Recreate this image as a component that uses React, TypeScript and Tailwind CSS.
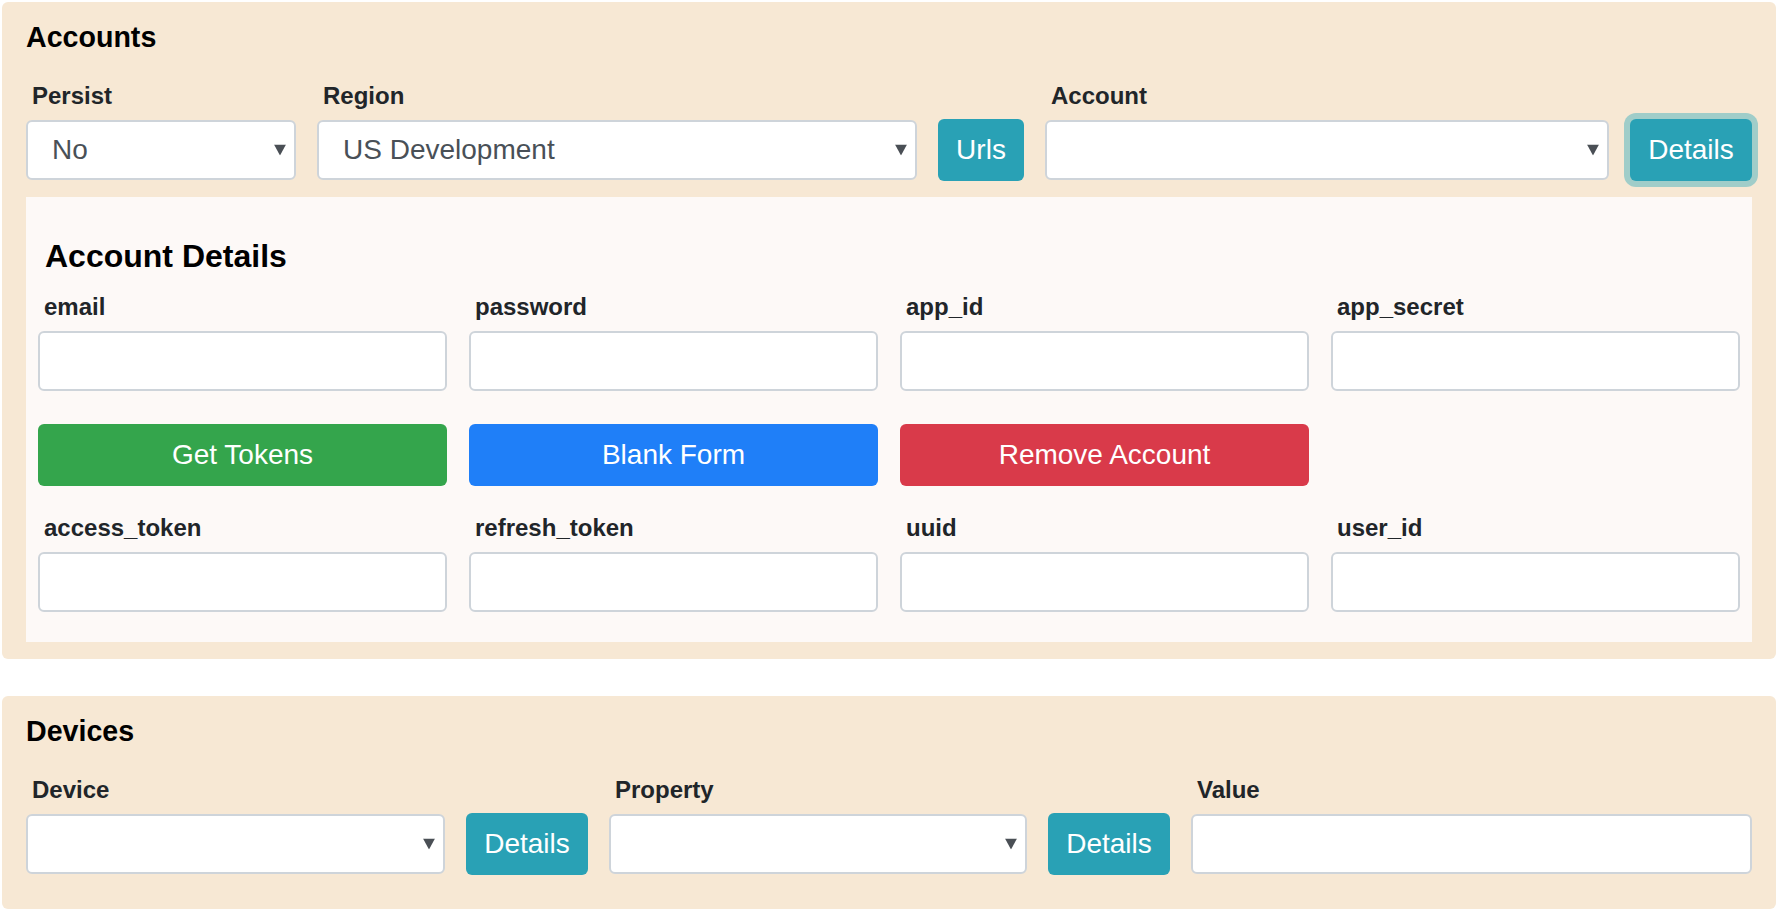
import { ReactNode } from 'react';

const Arrow = () => (
  <svg
    className="pointer-events-none absolute right-[10px] top-1/2 -translate-y-1/2"
    width="12"
    height="11"
    viewBox="0 0 12 11"
  >
    <polygon points="0,0 12,0 6,11" fill="#4a4f55" />
  </svg>
);

const Label = ({ children }: { children: ReactNode }) => (
  <label className="block pl-[6px] mb-[6px] text-[24px] leading-[36px] font-bold text-[#212529]">
    {children}
  </label>
);

const Select = ({ value }: { value?: string }) => (
  <div className="relative mb-px">
    <select
      defaultValue={value ?? ''}
      className="appearance-none block w-full h-[60px] pl-[24px] pr-[32px] bg-white border-2 border-[#ced4da] rounded-[6px] text-[28px] text-[#495057] outline-none"
    >
      {value ? <option>{value}</option> : <option value="" />}
    </select>
    <Arrow />
  </div>
);

const SelectField = ({ label, value, className }: { label: string; value?: string; className: string }) => (
  <div className={className}>
    <Label>{label}</Label>
    <Select value={value} />
  </div>
);

const TextField = ({ label }: { label: string }) => (
  <div>
    <Label>{label}</Label>
    <input
      type="text"
      className="block w-full h-[60px] px-[16px] bg-white border-2 border-[#ced4da] rounded-[6px] text-[28px] text-[#495057] outline-none"
    />
  </div>
);

const InfoButton = ({ children, focused, className }: { children: ReactNode; focused?: boolean; className: string }) => (
  <button
    className={
      'h-[62px] shrink-0 rounded-[6px] bg-[#29a1b5] text-white text-[28px] ' +
      className +
      (focused ? ' shadow-[0_0_0_6px_#a0cdc9]' : '')
    }
  >
    {children}
  </button>
);

export default function App() {
  return (
    <div className="min-h-screen bg-white p-[2px] font-['Liberation_Sans',Arial,sans-serif]">
      {/* Accounts */}
      <section className="rounded-[6px] bg-[#f7e8d4] px-[24px] pt-[18px] pb-[17px]">
        <h3 className="text-[28.6px] leading-[34px] font-bold text-black">Accounts</h3>

        <div className="mt-[24px] flex items-end gap-[21px]">
          <SelectField label="Persist" value="No" className="w-[270px] shrink-0" />
          <SelectField label="Region" value="US Development" className="w-[600px] shrink-0" />
          <InfoButton className="w-[86px]">Urls</InfoButton>
          <SelectField label="Account" className="flex-1" />
          <InfoButton className="w-[122px]" focused>
            Details
          </InfoButton>
        </div>

        {/* Account details panel */}
        <div className="mt-[16px] bg-[#fdf9f7] px-[12px] pt-[40px] pb-[30px]">
          <h2 className="pl-[7px] mb-[14px] text-[32px] leading-[38px] font-bold text-black">Account Details</h2>

          <div className="grid grid-cols-4 gap-x-[22px]">
            <TextField label="email" />
            <TextField label="password" />
            <TextField label="app_id" />
            <TextField label="app_secret" />
          </div>

          <div className="mt-[33px] grid grid-cols-4 gap-x-[22px]">
            <button className="h-[62px] rounded-[6px] bg-[#34a54c] text-white text-[28px]">Get Tokens</button>
            <button className="h-[62px] rounded-[6px] bg-[#1f7ff8] text-white text-[28px]">Blank Form</button>
            <button className="h-[62px] rounded-[6px] bg-[#d93a4a] text-white text-[28px]">Remove Account</button>
            <div />
          </div>

          <div className="mt-[24px] grid grid-cols-4 gap-x-[22px]">
            <TextField label="access_token" />
            <TextField label="refresh_token" />
            <TextField label="uuid" />
            <TextField label="user_id" />
          </div>
        </div>
      </section>

      {/* Devices */}
      <section className="mt-[37px] rounded-[6px] bg-[#f7e8d4] px-[24px] pt-[18px] pb-[34px]">
        <h3 className="text-[28.6px] leading-[34px] font-bold text-black">Devices</h3>

        <div className="mt-[24px] flex items-end gap-[21px]">
          <SelectField label="Device" className="w-[419px] shrink-0" />
          <InfoButton className="w-[122px]">Details</InfoButton>
          <SelectField label="Property" className="w-[418px] shrink-0" />
          <InfoButton className="w-[122px]">Details</InfoButton>
          <div className="flex-1">
            <Label>Value</Label>
            <input
              type="text"
              className="mb-px block w-full h-[60px] px-[16px] bg-white border-2 border-[#ced4da] rounded-[6px] text-[28px] text-[#495057] outline-none"
            />
          </div>
        </div>
      </section>
    </div>
  );
}
